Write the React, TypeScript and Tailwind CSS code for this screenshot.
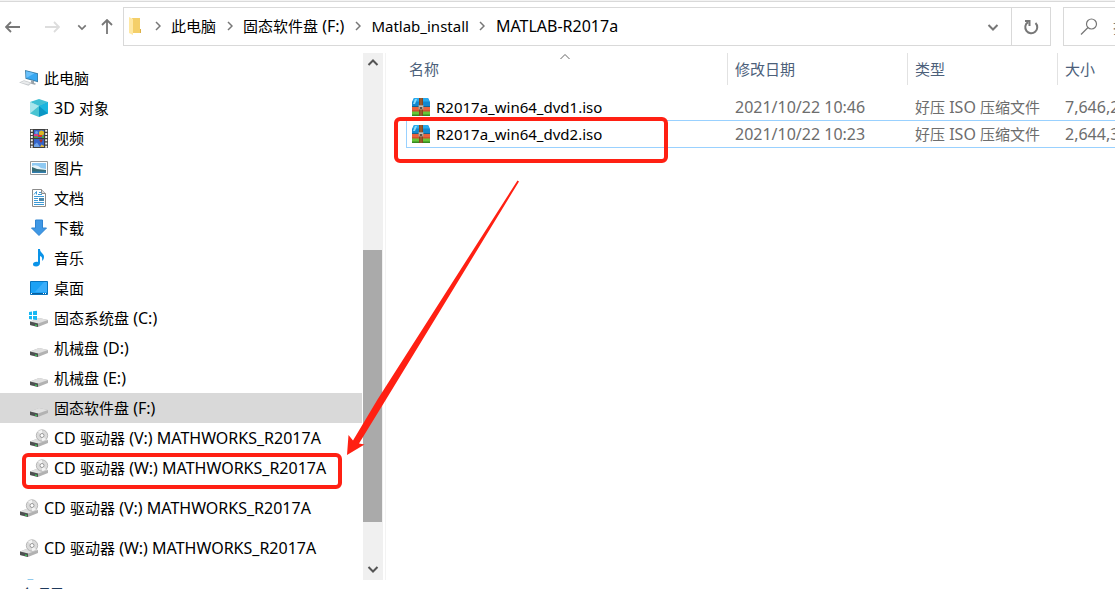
import React from 'react';

type IconProps = { className?: string };

function PcIcon() {
  return (
    <svg width="20" height="18" viewBox="0 0 20 18" aria-hidden="true">
      <path d="M6 1l13 3.200v9L6.500 9.800z" fill="#3c7fa8" />
      <path d="M7 2.200l11.200 2.800v7L7.400 9z" fill="#38a8f2" />
      <path d="M7 2.200l8.500 2.100L7.400 9z" fill="#6cc2fb" />
      <path d="M12 11.300l3 .8v2l2 .6-1 1-5-1.300 1-1z" fill="#9aa3aa" />
      <path d="M0 13.500l5-2.300 8 2.600-3.500 3z" fill="#c6cacd" />
      <path d="M1.500 13.400l3.500-1.500 6.300 2-2 1.700z" fill="#e9ebec" />
    </svg>
  );
}
function CubeIcon() {
  return (
    <svg width="20" height="18" viewBox="0 0 20 18" aria-hidden="true">
      <path d="M10 0l9 3-9 4-9-4z" fill="#3fc0d4" />
      <path d="M1 3l9 4v11l-9-3.500z" fill="#48c4d2" />
      <path d="M19 3l-9 4v11l9-3.500z" fill="#0a96c4" />
      <path d="M1 3l9 4-9 7.500z" fill="#a9e6ec" />
      <path d="M19 3l-9 4 9 7.500z" fill="#19b5df" />
    </svg>
  );
}
function VideoIcon() {
  return (
    <svg width="20" height="19" viewBox="0 0 20 19" aria-hidden="true">
      <path d="M1 0h18v19H1z" fill="#3d3d3d" />
      <path d="M5 1h10v8H5zM5 10h10v8H5z" fill="#3563c9" />
      <path d="M2.800 .7v18M17.200 .7v18" stroke="#efefef" strokeWidth="2" strokeDasharray="2 1.200" />
      <path d="M5 5h4v2.500H5z" fill="#d83c8a" />
      <circle cx="12.500" cy="4" r="2.600" fill="#d9b825" />
      <circle cx="7.500" cy="3.500" r="1.500" fill="#6aa8e8" />
      <path d="M9 6h4v2H9z" fill="#d43a22" />
      <path d="M5 7.500h4V9H5zM13 7h2v2h-2z" fill="#4ea844" />
      <path d="M10 10.500h4l-2 3.500z" fill="#b02c20" />
      <path d="M5 16l3-2.500 3 4.500H5z" fill="#6fa4e8" />
      <path d="M11 18l1.500-2.500L15 17v1z" fill="#e0b83c" />
    </svg>
  );
}
function PictureIcon() {
  return (
    <svg width="20" height="16" viewBox="0 0 20 16" aria-hidden="true">
      <path d="M1.500 1.500h17v13h-17z" fill="#fff" stroke="#999" />
      <path d="M3 3h14v10H3z" fill="#8fc9f2" />
      <path d="M3 6q5-2 9 2l5 1v4H3z" fill="#e6f3fa" />
      <path d="M3 7l5 2 9 1v3H3z" fill="#386c75" />
      <path d="M3 11.500h14V13H3z" fill="#317eaf" />
    </svg>
  );
}
function DocIcon() {
  return (
    <svg width="20" height="18" viewBox="0 0 20 18" aria-hidden="true">
      <path d="M3.500 .5h9l4 4v13h-13z" fill="#fff" stroke="#8c8c8c" />
      <path d="M12.500 .5v4h4" fill="#ddd" stroke="#8c8c8c" />
      <path d="M5 5.500l2.500-3v3M10 3.500h2M9 5.500h4M5 7.500h10M5 9.500h4M5 11.500h4M5 13.500h10M5 15.500h10" stroke="#3d9ad6" fill="none" />
      <path d="M10 9h5v3h-5z" fill="#4c86a8" />
    </svg>
  );
}
function DownIcon() {
  return (
    <svg width="20" height="18" viewBox="0 0 20 18" aria-hidden="true">
      <path d="M6.500 1h7v8h4l-7.500 7.500L2.500 9h4z" fill="#3f98e5" stroke="#2f84d2" />
    </svg>
  );
}
function MusicIcon() {
  return (
    <svg width="20" height="18" viewBox="0 0 20 18" aria-hidden="true">
      <path d="M9 0h2c0 4 4 4 4 8 0 2-1 3-2 4 .5-3 0-4.500-2-5v7c0 2-1.500 3.500-4 3.500-2 0-3-1-3-2.300 0-1.700 2-2.700 5-2.200z" fill="#0a93e8" />
    </svg>
  );
}
function DesktopIcon() {
  return (
    <svg width="20" height="14" viewBox="0 0 20 14" aria-hidden="true">
      <path d="M1.500 .5h17v13h-17z" fill="#1ba1f5" stroke="#0873bd" />
      <path d="M15 1h3v10H6z" fill="#3aaefb" />
      <path d="M2 12.500h16" stroke="#075f9e" />
      <path d="M2 12.500h1M14 12.500h1M16 12.500h1" stroke="#fff" />
    </svg>
  );
}
function DriveShape() {
  return (
    <>
      <path d="M1 12.500L10 9l9 2v3L9 18l-8-2z" fill="#b2b2b2" />
      <path d="M1 12.500L10 9l9 2-10 3.500z" fill="#e0e0e0" />
      <path d="M1 12.500l8 2V18l-8-2z" fill="#4d5050" />
      <path d="M6 15.500l2 .5v1l-2-.5z" fill="#32e350" />
    </>
  );
}
function DriveIcon() {
  return (
    <svg width="20" height="19" viewBox="0 0 20 19" aria-hidden="true">
      <DriveShape />
    </svg>
  );
}
function SystemDriveIcon() {
  return (
    <svg width="20" height="19" viewBox="0 0 20 19" aria-hidden="true">
      <DriveShape />
      <path d="M0 3l3-.5V6H0zM4 2.300L8 1.700V6H4zM0 7h3v3.500L0 10zM4 7h4v4l-4-.5z" fill="#16b8f3" />
    </svg>
  );
}
function CdIcon() {
  return (
    <svg width="20" height="19" viewBox="0 0 20 19" aria-hidden="true">
      <DriveShape />
      <circle cx="13" cy="6.500" r="5.700" fill="#dadada" stroke="#a9a9a9" strokeWidth=".8" />
      <path d="M13 6.500L9 2.500a5.700 5.700 0 0 1 4-1.500zM13 6.500l4 4a5.700 5.700 0 0 1-4 1.500z" fill="#f3f3f3" />
      <circle cx="13" cy="6.500" r="2" fill="#fff" stroke="#999" />
    </svg>
  );
}
function NetworkIcon() {
  return (
    <svg width="20" height="18" viewBox="0 0 20 18" aria-hidden="true">
      <path d="M9 0h5l4 5v6l-5 4-6-2-3-7z" fill="#8ec9ec" />
      <path d="M1 12l6-2 6 4-5 3z" fill="#c6cacd" />
    </svg>
  );
}
function ArchiveIcon() {
  return (
    <svg className="shrink-0" width="20" height="18" viewBox="0 0 20 18" aria-hidden="true">
      <path d="M3 0h14l2 4v5H1V4z" fill="#1288cf" />
      <path d="M3 0h14l1.500 3.500h-17z" fill="#27abef" />
      <path d="M4 1h2L4 6H2z" fill="#8cdcfb" />
      <path d="M1 8.500h18V14H1z" fill="#e8623c" />
      <path d="M1 8h18v1H1z" fill="#17628f" />
      <path d="M1 12.500h18v1H1z" fill="#b5422a" />
      <path d="M1 13.500h18V18H1z" fill="#66c638" />
      <path d="M1 16.500h18V18H1z" fill="#368b20" />
      <path d="M8 0h4v18H8z" fill="#87481f" />
      <path d="M9.500 0h1v18h-1z" fill="#a96a3c" />
      <path d="M7.500 7h5v4.500h-5z" fill="#a89c90" />
      <path d="M8.500 8h1v1h-1zM10.500 8h1v1h-1z" fill="#eee6dc" />
      <path d="M9 9h2v2H9z" fill="#594f48" />
    </svg>
  );
}
function FolderIcon() {
  return (
    <svg className="shrink-0" width="14" height="18" viewBox="0 0 14 18" aria-hidden="true">
      <path d="M4 1h8v11l1 1v3H4z" fill="#f4cf69" />
      <path d="M1 0l4 2v16l-4-2z" fill="#ffe8a3" />
      <path d="M12 12h1v4h-1z" fill="#dcb047" />
    </svg>
  );
}
function Chevron({ className }: IconProps) {
  return (
    <svg className={className} width="12" height="12" viewBox="0 0 12 12" fill="none" stroke="currentColor" strokeWidth="2" aria-hidden="true">
      <path d="M1.500 4L6 8.500 10.500 4" />
    </svg>
  );
}
function Crumb() {
  return (
    <svg width="6" height="10" viewBox="0 0 6 10" fill="none" stroke="#777" strokeWidth="1.500" aria-hidden="true">
      <path d="M1 1l4 4-4 4" />
    </svg>
  );
}
function Arrow({ className }: IconProps) {
  return (
    <svg className={className} width="16" height="12" viewBox="0 0 16 12" fill="none" stroke="currentColor" strokeWidth="1.800" aria-hidden="true">
      <path d="M15 6H1.500M6 1L1 6l5 5" />
    </svg>
  );
}

/* Chinese runs keep the base size; Latin runs are set one step larger. */
function Label({ text }: { text: string }) {
  return (
    <span className="whitespace-pre">
      {text.split(/([\u4e00-\u9fff]+)/).filter(Boolean).map((part, i) =>
        /[\u4e00-\u9fff]/.test(part) ? part : <span key={i} className="text-base leading-5">{part}</span>
      )}
    </span>
  );
}

type Item = { label: string; icon: () => React.JSX.Element; root?: boolean; selected?: boolean; marked?: boolean };

const tree: Item[] = [
  { label: '此电脑', icon: PcIcon, root: true },
  { label: '3D 对象', icon: CubeIcon },
  { label: '视频', icon: VideoIcon },
  { label: '图片', icon: PictureIcon },
  { label: '文档', icon: DocIcon },
  { label: '下载', icon: DownIcon },
  { label: '音乐', icon: MusicIcon },
  { label: '桌面', icon: DesktopIcon },
  { label: '固态系统盘 (C:)', icon: SystemDriveIcon },
  { label: '机械盘 (D:)', icon: DriveIcon },
  { label: '机械盘 (E:)', icon: DriveIcon },
  { label: '固态软件盘 (F:)', icon: DriveIcon, selected: true },
  { label: 'CD 驱动器 (V:) MATHWORKS_R2017A', icon: CdIcon },
  { label: 'CD 驱动器 (W:) MATHWORKS_R2017A', icon: CdIcon, marked: true },
];
const drives: Item[] = [
  { label: 'CD 驱动器 (V:) MATHWORKS_R2017A', icon: CdIcon, root: true },
  { label: 'CD 驱动器 (W:) MATHWORKS_R2017A', icon: CdIcon, root: true },
];
const files = [
  { name: 'R2017a_win64_dvd1.iso', date: '2021/10/22 10:46', type: '好压 ISO 压缩文件', size: '7,646,2', focused: false },
  { name: 'R2017a_win64_dvd2.iso', date: '2021/10/22 10:23', type: '好压 ISO 压缩文件', size: '2,644,3', focused: true },
];

function TreeItem({ item }: { item: Item }) {
  const Icon = item.icon;
  return (
    <li className="relative">
      <a
        href="#"
        className={`flex h-[30px] items-center gap-[5px] whitespace-nowrap ${item.root ? 'pl-[19px]' : 'pl-[29px]'} ${item.selected ? 'bg-[#d9d9d9]' : ''}`}
      >
        <span className="flex w-5 shrink-0 justify-center"><Icon /></span>
        <Label text={item.label} />
      </a>
      {item.marked && <span className="pointer-events-none absolute top-0 left-[22px] h-9 w-80 rounded-md border-4 border-[#ff2013]" />}
    </li>
  );
}

function CrumbLink({ children, className = '' }: { children: React.ReactNode; className?: string }) {
  return (
    <li className="flex items-center whitespace-nowrap">
      <span className="flex w-[27px] justify-center"><Crumb /></span>
      <a href="#" className={className}>{children}</a>
    </li>
  );
}

const headCell = 'h-[41px] p-0 align-top font-normal text-[#4c607a]';
const headBox = 'flex h-8 items-center pl-[7px]';

export default function App() {
  return (
    <div className="relative flex h-screen flex-col overflow-hidden border-t border-[#f3f3f3] bg-white font-['Noto_Sans','Noto_Sans_CJK_SC',sans-serif] text-[15px] leading-5 text-black">
      <header className="flex h-[52px] shrink-0 items-start border-t border-[#d9d9d9] pt-[5px]">
        <nav className="flex h-10 w-[123px] shrink-0 items-center pl-[5px] text-[#777]" aria-label="导航">
          <button aria-label="后退"><Arrow /></button>
          <button aria-label="前进" className="ml-[23px]"><Arrow className="rotate-180 text-[#ddd]" /></button>
          <button aria-label="最近位置" className="ml-[17px]"><Chevron className="h-2.5 w-2.5" /></button>
          <button aria-label="向上" className="ml-3"><Arrow className="rotate-90" /></button>
        </nav>
        <div className="flex h-[39px] min-w-0 flex-1 border border-[#d9d9d9]">
          <div className="flex min-w-0 flex-1 items-center gap-0.5 pb-0.5 pl-1">
            <FolderIcon />
            <ol className="flex items-center">
              <CrumbLink>此电脑</CrumbLink>
              <CrumbLink><Label text="固态软件盘 (F:)" /></CrumbLink>
              <CrumbLink>Matlab_install</CrumbLink>
              <CrumbLink className="text-base leading-5">MATLAB-R2017a</CrumbLink>
            </ol>
          </div>
          <button aria-label="历史记录" className="w-9 pl-3 text-[#777]"><Chevron /></button>
          <button aria-label="刷新" className="flex w-[39px] items-center justify-center border-l border-[#d9d9d9]">
            <svg width="16" height="16" viewBox="0 0 16 16" fill="none" stroke="#777" strokeWidth="2" aria-hidden="true">
              <path d="M5 3.200a6 6 0 1 0 7.500 .8M2 2h4.500v5" />
            </svg>
          </button>
        </div>
        <div className="ml-3 flex h-[39px] w-[52px] shrink-0 items-center overflow-hidden border-y border-l border-[#d9d9d9] pl-4">
          <svg className="shrink-0" width="18" height="18" viewBox="0 0 18 18" fill="none" stroke="#777" strokeWidth="1.200" aria-hidden="true">
            <circle cx="11.500" cy="6" r="5" />
            <path d="M8 9.500L1 16.500" />
          </svg>
          <input aria-label="搜索" placeholder="搜索" className="ml-[15px] w-20 shrink-0 placeholder:text-[#777]" />
        </div>
      </header>
      <div className="flex min-h-0 flex-1">
        <aside className="flex w-[383px] shrink-0">
          <div className="min-w-0 flex-1 overflow-hidden pt-2.5 pr-px">
            <ul>{tree.map((i) => <TreeItem key={i.label} item={i} />)}</ul>
            <ul className="mt-2.5 flex flex-col gap-2.5">
              {drives.map((i) => <TreeItem key={i.label} item={i} />)}
              <li>
                <a href="#" aria-label="网络" className="flex h-[30px] items-center pl-[19px]"><NetworkIcon /></a>
              </li>
            </ul>
          </div>
          <div className="flex w-5 flex-col items-center bg-[#f0f0f0] text-[#555]">
            <button aria-label="向上滚动" className="flex h-5 items-center"><Chevron className="rotate-180" /></button>
            <div className="mt-[177px] h-[272px] w-full border-r border-[#f0f0f0] bg-[#aaa]" />
            <button aria-label="向下滚动" className="mt-auto flex h-[22px] items-center"><Chevron /></button>
          </div>
        </aside>
        <main className="ml-0.5 min-w-0 flex-1 overflow-hidden border-l border-[#f3f3f3] pl-4">
          <table className="w-full table-fixed border-separate border-spacing-0 text-left whitespace-nowrap">
            <colgroup>
              <col className="w-[326px]" />
              <col className="w-[180px]" />
              <col className="w-[150px]" />
              <col />
            </colgroup>
            <thead>
              <tr>
                <th className={headCell}>
                  <div className={`${headBox} relative border-r border-[#e2e2e2]`}>
                    名称
                    <svg className="absolute top-0 left-1/2 -translate-x-1/2" width="12" height="8" viewBox="0 0 12 8" fill="none" stroke="#666" aria-hidden="true">
                      <path d="M1.500 6L6 1.500 10.500 6" />
                    </svg>
                  </div>
                </th>
                <th className={headCell}><div className={`${headBox} border-r border-[#e2e2e2]`}>修改日期</div></th>
                <th className={headCell}><div className={`${headBox} border-r border-[#e2e2e2]`}>类型</div></th>
                <th className={headCell}><div className={headBox}>大小</div></th>
              </tr>
            </thead>
            <tbody>
              {files.map((f) => {
                const row = f.focused ? 'h-7 border-y border-[#99d1ff]' : 'h-[26px]';
                const box = `flex items-center pl-[7px] text-[#6d6d6d] ${row}`;
                return (
                  <tr key={f.name}>
                    <td className="relative p-0">
                      <div className={`ml-1 flex items-center gap-[5px] ${row} ${f.focused ? 'border-l pl-1' : 'pl-[5px]'}`}>
                        <ArchiveIcon />
                        {f.name}
                      </div>
                      {f.focused && <span className="pointer-events-none absolute -top-[3px] -left-2 h-[46px] w-[274px] rounded-md border-4 border-[#ff2013]" />}
                    </td>
                    <td className="p-0"><div className={`${box} text-base leading-5`}>{f.date}</div></td>
                    <td className="p-0"><div className={box}><Label text={f.type} /></div></td>
                    <td className="p-0"><div className={`${box} text-base leading-5`}>{f.size}</div></td>
                  </tr>
                );
              })}
            </tbody>
          </table>
        </main>
      </div>
      <footer className="h-[9px] shrink-0 overflow-hidden pt-1 pl-[7px] text-[#1e395b]">2 个项目</footer>
      <svg className="pointer-events-none absolute top-[179px] left-[346px]" width="174" height="276" viewBox="346 180 174 276" aria-hidden="true">
        <path d="M517.500 180.500l1.500 1L386 399.500 359 443.500l5.500 1L347 455l1.500-20 4.500 5.500L377.500 399.500z" fill="#ff2013" />
      </svg>
    </div>
  );
}
